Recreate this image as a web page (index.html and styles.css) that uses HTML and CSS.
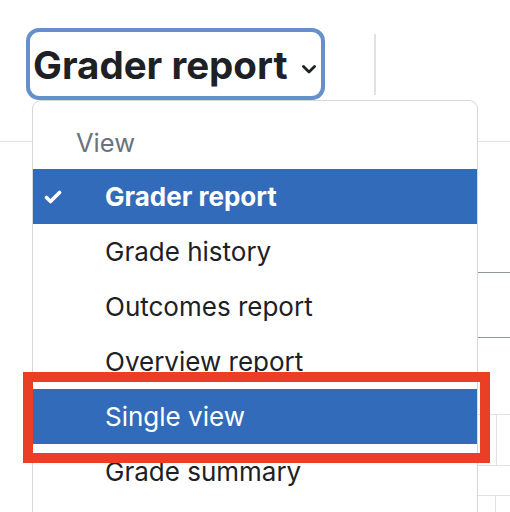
FILE: index.html
```html
<!doctype html>
<html lang="en">
<head>
  <meta charset="utf-8">
  <title>Grader report</title>
  <link rel="stylesheet" href="styles.css">
</head>
<body>
  <div class="bar">
    <div class="picker">
      <span class="picker-title">Grader report</span>
      <svg class="chevron" width="14" height="9" viewBox="0 0 14 9"><polyline points="1.5,1.5 7,7 12.5,1.5" fill="none" stroke="#1d2125" stroke-width="2.8" stroke-linecap="round" stroke-linejoin="round"/></svg>
    </div>
    <div class="divider"></div>
  </div>

  <div class="sheet">
    <div class="cells">
      <div class="row r1"></div>
      <div class="row r2 dark"></div>
      <div class="row r3 dark"></div>
      <div class="row r4"><div class="cell"></div></div>
      <div class="row r5"></div>
      <div class="row r6"><div class="cell"></div></div>
    </div>
  </div>

  <div class="menu">
    <div class="menu-head">View</div>
    <div class="item active">
      <svg class="check" width="18" height="14" viewBox="0 0 18 14"><polyline points="2.5,7.5 6.5,11.5 15.5,2.5" fill="none" stroke="#fff" stroke-width="3.6" stroke-linecap="round" stroke-linejoin="round"/></svg>
      <span class="item-label bold">Grader report</span>
    </div>
    <div class="item"><span class="item-label">Grade history</span></div>
    <div class="item"><span class="item-label">Outcomes report</span></div>
    <div class="item"><span class="item-label">Overview report</span></div>
    <div class="item active"><span class="item-label">Single view</span></div>
    <div class="item"><span class="item-label">Grade summary</span></div>
  </div>

  <div class="callout"></div>
</body>
</html>
```

FILE: styles.css
```css
html, body{
    margin: 0;
    background: #fff;
    font-family: Inter, "Liberation Sans", sans-serif;
    color: #1d2125;
    overflow: hidden;
    height: 512px;
}
.bar{
    height: 141px;
    display: flex;
    align-items: flex-start;
}
.picker{
    margin: 28px 0 0 26px;
    width: 299px;
    height: 72px;
    box-sizing: border-box;
    border: 4px solid #6690cb;
    border-radius: 13px;
    display: flex;
    align-items: center;
    padding-left: 3px;
}
.picker-title{
    font-size: 38.5px;
    font-weight: 700;
    line-height: 1;
    margin-top: 2px;
}
.chevron{
    margin: 10px 0 0 15px;
}
.divider{
    width: 2px;
    height: 61px;
    margin: 34px 0 0 49px;
    background: #dee2e6;
}
.sheet{
    border-top: 1px solid #dee2e6;
}
.cells{
    margin-left: 440px;
}
.row{
    border-top: 1px solid #dee2e6;
    display: flex;
    justify-content: flex-end;
}
.row.dark{ border-top-color: #8f959e; }
.r1{ height: 130px; border-top: none; }
.r2{ height: 64px; }
.r3{ height: 76px; }
.r4{ height: 50px; }
.r5{ height: 29px; }
.r6{ height: 16px; }
.cell{
    width: 13px;
    border-left: 1px solid #dee2e6;
}
.r6 .cell{ width: 14px; }

.menu{
    position: absolute;
    left: 32px;
    top: 100px;
    width: 446px;
    height: 412px;
    box-sizing: border-box;
    border: 1px solid #d5d7da;
    border-bottom: none;
    border-radius: 9px 9px 0 0;
    background: #fff;
    overflow: hidden;
}
.menu-head{
    height: 68px;
    padding-left: 43px;
    box-sizing: border-box;
    padding-top: 29px;
    font-size: 25.5px;
    color: #6a737b;
    line-height: 1;
}
.item{
    height: 55px;
    display: flex;
    align-items: center;
    padding-left: 72px;
    position: relative;
    font-size: 26px;
}
.item.active{
    background: #326bba;
    color: #fff;
}
.item-label{ line-height: 1; }
.bold{ font-weight: 700; }
.check{
    position: absolute;
    left: 11px;
    top: 21px;
}
.callout{
    position: absolute;
    left: 23px;
    top: 372px;
    width: 467px;
    height: 91px;
    box-sizing: border-box;
    border: 10px solid #e83f25;
}
```
